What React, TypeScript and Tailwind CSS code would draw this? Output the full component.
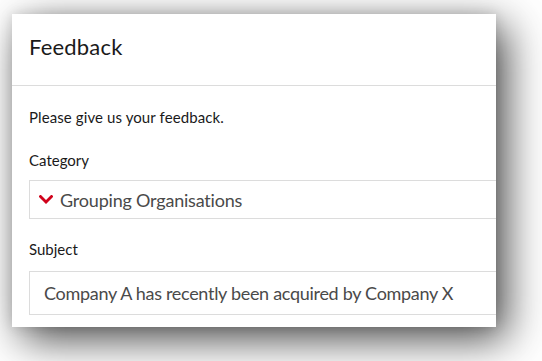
export default function App() {
  return (
    <div className="w-[542px] h-[361px] bg-white overflow-hidden pl-[12px] pt-[14px]" style={{ fontFamily: "Lato, 'Noto Sans', sans-serif" }}>
      <div className="w-[484px] h-[313px] bg-white overflow-hidden shadow-[10px_12px_40px_rgba(0,0,0,0.72),0_0_12px_rgba(0,0,0,0.12)]">
        <div className="h-[72px] border-b border-[#dcdcdc] pl-[17px] pt-[20px]">
          <div className="text-[22px] leading-[26px] tracking-[0.2px] text-[#1a1a1a]">Feedback</div>
        </div>
        <div className="pl-[17px]">
          <div className="mt-[22px] text-[15px] leading-[18px] tracking-[0.1px] text-[#1a1a1a]">Please give us your feedback.</div>
          <div className="mt-[25px] text-[15px] leading-[18px] text-[#1a1a1a]">Category</div>
          <div className="mt-[11px] w-[500px] h-[39px] border border-[#dcdcdc] flex items-center pl-[9px]">
            <svg width="14" height="9" viewBox="0 0 14 9" className="shrink-0">
              <path d="M1.5 1.5 L7 7 L12.5 1.5" fill="none" stroke="#d0021b" strokeWidth="2.8" strokeLinecap="square" />
            </svg>
            <span className="ml-[7px] text-[18px] leading-[22px] tracking-[-0.2px] text-[#4a4a4a]">Grouping Organisations</span>
          </div>
          <div className="mt-[21px] text-[15px] leading-[18px] text-[#1a1a1a]">Subject</div>
          <div className="mt-[13px] w-[500px] h-[44px] border border-[#dcdcdc] flex items-center pl-[14px]">
            <span className="text-[18px] leading-[22px] tracking-[-0.3px] text-[#4a4a4a]">Company A has recently been acquired by Company X</span>
          </div>
        </div>
      </div>
    </div>
  );
}
